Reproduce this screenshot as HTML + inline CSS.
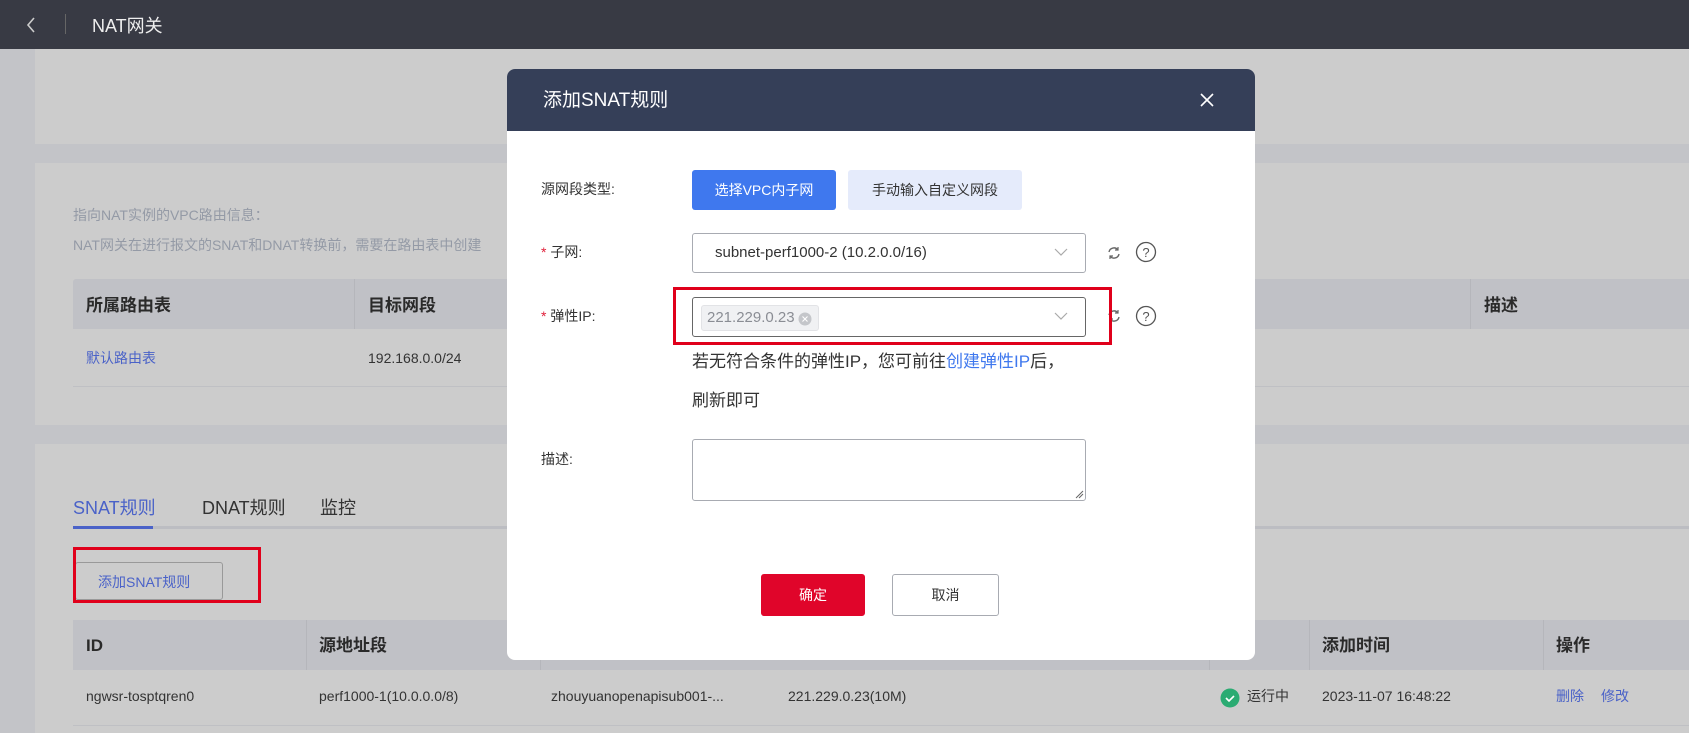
<!DOCTYPE html>
<html><head><meta charset="utf-8"><style>
*{box-sizing:border-box;margin:0;padding:0}
body{width:1689px;height:733px;overflow:hidden;background:#c3c4c8;font-family:"Liberation Sans","Noto Sans CJK SC",sans-serif;position:relative;color:#333;line-height:1.2}
.a{position:absolute;white-space:nowrap}
.hdr{left:0;top:0;width:1689px;height:49px;background:#383a44}
.card{left:35px;width:1654px;background:#cccccc}
.th{background:#c0c1c6;height:50px}
.thc{font-weight:bold;font-size:17px;color:#2a2a2a;line-height:22px}
.dv{width:1px;background:#b5b6bb}
.lk{color:#4a62c8}
.modal{left:507px;top:69px;width:748px;height:591px;background:#fff;border-radius:8px;overflow:hidden}
.mh{left:0;top:0;width:748px;height:62px;background:#353f58}
.lbl{font-size:14px;color:#333}
.sel{border:1px solid #a8abb2;border-radius:3px;background:#fff}
.star{color:#e0203a}
</style></head><body>
<div class="a hdr"></div>
<svg class="a" style="left:25px;top:16px" width="12" height="18"><path d="M9 2L3 9l6 7" stroke="#ccc" stroke-width="1.6" fill="none"/></svg>
<div class="a" style="left:65px;top:14px;width:1px;height:20px;background:#666"></div>
<div class="a" style="left:92px;top:16px;font-size:18px;color:#eee">NAT网关</div>

<div class="a card" style="top:49px;height:95px"></div>
<div class="a card" style="top:163px;height:262px"></div>
<div class="a card" style="top:444px;height:289px"></div>

<div class="a" style="left:73px;top:207px;font-size:14px;color:#949aa6">指向NAT实例的VPC路由信息：</div>
<div class="a" style="left:73px;top:237px;font-size:14px;color:#949aa6">NAT网关在进行报文的SNAT和DNAT转换前，需要在路由表中创建</div>
<div class="a th" style="left:73px;top:279px;width:1616px;border-radius:3px 0 0 0"></div>
<div class="a dv" style="left:354px;top:279px;height:50px"></div>
<div class="a dv" style="left:1470px;top:279px;height:50px"></div>
<div class="a thc" style="left:86px;top:295px">所属路由表</div>
<div class="a thc" style="left:368px;top:295px">目标网段</div>
<div class="a thc" style="left:1484px;top:295px">描述</div>
<div class="a lk" style="left:86px;top:350px;font-size:14px">默认路由表</div>
<div class="a" style="left:368px;top:350px;font-size:14px;color:#333">192.168.0.0/24</div>
<div class="a" style="left:73px;top:386px;width:1616px;height:1px;background:#bfc0c4"></div>

<div class="a" style="left:73px;top:498px;font-size:18px;color:#4a62c8">SNAT规则</div>
<div class="a" style="left:202px;top:498px;font-size:18px;color:#333">DNAT规则</div>
<div class="a" style="left:320px;top:498px;font-size:18px;color:#333">监控</div>
<div class="a" style="left:73px;top:526px;width:1616px;height:3px;background:#bcbdc2"></div>
<div class="a" style="left:73px;top:526px;width:80px;height:3px;background:#4a62c8"></div>
<div class="a" style="left:75px;top:562px;width:148px;height:38px;border:1px solid #999;border-radius:3px"></div>
<div class="a lk" style="left:98px;top:574px;font-size:14px">添加SNAT规则</div>
<div class="a" style="left:73px;top:547px;width:188px;height:56px;border:3px solid #e0001b"></div>

<div class="a th" style="left:73px;top:620px;width:1616px"></div>
<div class="a dv" style="left:306px;top:620px;height:50px"></div>
<div class="a dv" style="left:540px;top:620px;height:50px"></div>
<div class="a dv" style="left:1209px;top:620px;height:50px"></div>
<div class="a dv" style="left:1309px;top:620px;height:50px"></div>
<div class="a dv" style="left:1543px;top:620px;height:50px"></div>
<div class="a thc" style="left:86px;top:635px">ID</div>
<div class="a thc" style="left:319px;top:635px">源地址段</div>
<div class="a thc" style="left:1322px;top:635px">添加时间</div>
<div class="a thc" style="left:1556px;top:635px">操作</div>
<div class="a" style="left:86px;top:688px;font-size:14px">ngwsr-tosptqren0</div>
<div class="a" style="left:319px;top:688px;font-size:14px">perf1000-1(10.0.0.0/8)</div>
<div class="a" style="left:551px;top:688px;font-size:14px">zhouyuanopenapisub001-...</div>
<div class="a" style="left:788px;top:688px;font-size:14px">221.229.0.23(10M)</div>
<svg class="a" style="left:1220px;top:688px" width="20" height="20"><circle cx="10" cy="10" r="9.5" fill="#2bab72"/><path d="M6 10l3 3 5-5" stroke="#fff" stroke-width="1.6" fill="none"/></svg>
<div class="a" style="left:1247px;top:688px;font-size:14px">运行中</div>
<div class="a" style="left:1322px;top:688px;font-size:14px">2023-11-07 16:48:22</div>
<div class="a lk" style="left:1556px;top:688px;font-size:14px">删除</div>
<div class="a lk" style="left:1601px;top:688px;font-size:14px">修改</div>
<div class="a" style="left:73px;top:725px;width:1616px;height:1px;background:#bfc0c4"></div>

<div class="a modal">
 <div class="a mh"></div>
 <div class="a" style="left:36px;top:21px;font-size:19px;color:#fff">添加SNAT规则</div>
 <svg class="a" style="left:693px;top:24px" width="14" height="14"><path d="M1 1l12 12M13 1L1 13" stroke="#fff" stroke-width="1.6"/></svg>

 <div class="a lbl" style="left:34px;top:112px">源网段类型:</div>
 <div class="a" style="left:185px;top:101px;width:144px;height:40px;background:#3f78ee;border-radius:3px;color:#fff;font-size:14px;text-align:center;line-height:40px">选择VPC内子网</div>
 <div class="a" style="left:341px;top:101px;width:174px;height:40px;background:#e5ebfb;border-radius:3px;color:#333;font-size:14px;text-align:center;line-height:40px">手动输入自定义网段</div>

 <div class="a lbl" style="left:34px;top:175px"><span class="star">* </span>子网:</div>
 <div class="a sel" style="left:185px;top:164px;width:394px;height:40px"></div>
 <div class="a" style="left:208px;top:175px;font-size:15px;color:#333">subnet-perf1000-2 (10.2.0.0/16)</div>
 <svg class="a" style="left:546px;top:177px" width="16" height="12"><path d="M2 3l6 6 6-6" stroke="#aaa" stroke-width="1.2" fill="none"/></svg>
 <svg class="a" style="left:598px;top:175px" width="18" height="18"><path d="M4 8a5 5 0 0 1 9-2M14 10a5 5 0 0 1-9 2" stroke="#666" stroke-width="1.4" fill="none"/><path d="M13 3v3h-3M5 15v-3h3" stroke="#666" stroke-width="1.2" fill="none"/></svg>
 <svg class="a" style="left:628px;top:172px" width="22" height="22"><circle cx="11" cy="11" r="9.5" stroke="#555" stroke-width="1.3" fill="none"/><text x="11" y="16" font-size="13" text-anchor="middle" fill="#555" font-family="Liberation Sans">?</text></svg>

 <div class="a lbl" style="left:34px;top:239px"><span class="star">* </span>弹性IP:</div>
 <div class="a sel" style="left:185px;top:228px;width:394px;height:40px;border-color:#666"></div>
 <div class="a" style="left:194px;top:236px;width:118px;height:26px;background:#f0f1f3;border:1px solid #e2e3e6;border-radius:3px"></div>
 <div class="a" style="left:200px;top:240px;font-size:15px;color:#8a8d94">221.229.0.23</div>
 <svg class="a" style="left:291px;top:243px" width="14" height="14"><circle cx="7" cy="7" r="6.5" fill="#c4c6ca"/><path d="M4.5 4.5l5 5M9.5 4.5l-5 5" stroke="#fff" stroke-width="1.1"/></svg>
 <svg class="a" style="left:546px;top:241px" width="16" height="12"><path d="M2 3l6 6 6-6" stroke="#aaa" stroke-width="1.2" fill="none"/></svg>
 <svg class="a" style="left:598px;top:238px" width="18" height="18"><path d="M4 8a5 5 0 0 1 9-2M14 10a5 5 0 0 1-9 2" stroke="#666" stroke-width="1.4" fill="none"/><path d="M13 3v3h-3M5 15v-3h3" stroke="#666" stroke-width="1.2" fill="none"/></svg>
 <svg class="a" style="left:628px;top:236px" width="22" height="22"><circle cx="11" cy="11" r="9.5" stroke="#555" stroke-width="1.3" fill="none"/><text x="11" y="16" font-size="13" text-anchor="middle" fill="#555" font-family="Liberation Sans">?</text></svg>
 <div class="a" style="left:166px;top:218px;width:439px;height:58px;border:3px solid #e0001b"></div>

 <div class="a" style="left:185px;top:283px;font-size:17px;color:#333">若无符合条件的弹性IP，您可前往<span style="color:#3f78ee">创建弹性IP</span>后，</div>
 <div class="a" style="left:185px;top:322px;font-size:17px;color:#333">刷新即可</div>

 <div class="a lbl" style="left:34px;top:382px">描述:</div>
 <div class="a sel" style="left:185px;top:370px;width:394px;height:62px"></div>
 <svg class="a" style="left:568px;top:421px" width="9" height="9"><path d="M1 8L8 1M4 8L8 4" stroke="#666" stroke-width="1"/></svg>

 <div class="a" style="left:254px;top:505px;width:104px;height:42px;background:#e0052a;border-radius:3px;color:#fff;font-size:14px;text-align:center;line-height:42px">确定</div>
 <div class="a" style="left:385px;top:505px;width:107px;height:42px;border:1px solid #a8abb2;border-radius:3px;color:#333;font-size:14px;text-align:center;line-height:40px">取消</div>
</div>
</body></html>
